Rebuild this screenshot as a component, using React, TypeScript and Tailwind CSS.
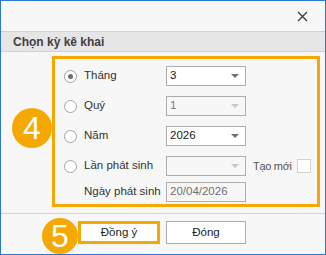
import { useState } from 'react'

type Row = {
  key: string
  label: string
  value: string
  disabled?: boolean
}

const rows: Row[] = [
  { key: 'thang', label: 'Tháng', value: '3' },
  { key: 'quy', label: 'Quý', value: '1', disabled: true },
  { key: 'nam', label: 'Năm', value: '2026' },
  { key: 'lan', label: 'Lần phát sinh', value: '', disabled: true },
]

function Radio({ checked }: { checked: boolean }) {
  return (
    <span className="w-[13px] h-[13px] rounded-full border border-[#a3a3a3] bg-white flex items-center justify-center shrink-0">
      {checked && <span className="w-[5px] h-[5px] rounded-full bg-[#6e6e6e]" />}
    </span>
  )
}

function Combo({ value, disabled }: { value: string; disabled?: boolean }) {
  return (
    <div
      className={`w-[80px] h-[20px] shrink-0 border border-[#adadad] flex items-center justify-between pl-[3px] pr-[6px] ${
        disabled ? 'bg-[#f7f7f7] text-[#7a7a7a]' : 'bg-white text-[#202020]'
      }`}
    >
      <span className="leading-none">{value}</span>
      <span
        className={`w-0 h-0 border-l-[4px] border-r-[4px] border-t-[4px] border-l-transparent border-r-transparent ${
          disabled ? 'border-t-[#c9c9c9]' : 'border-t-[#6f6f6f]'
        }`}
      />
    </div>
  )
}

export default function App() {
  const [selected, setSelected] = useState('thang')

  return (
    <div
      className="relative w-[326px] h-[255px] border border-[#2b78d4] bg-[#f7f7f7] flex flex-col text-[11.5px] text-[#333] whitespace-nowrap"
      style={{ fontFamily: '"Liberation Sans", Arial, sans-serif' }}
    >
      {/* Title bar */}
      <div className="h-[30px] flex items-center justify-end pr-[17px] shrink-0">
        <svg width="11" height="11" viewBox="0 0 11 11" className="mt-[1px]">
          <path d="M1 1L10 10M10 1L1 10" stroke="#3c3c3c" strokeWidth="1.3" />
        </svg>
      </div>

      {/* Group header */}
      <div className="h-[21px] bg-[#e6e6e6] border-t border-b border-[#d2d2d2] flex items-center pl-[12px] shrink-0">
        <span className="font-bold text-[12px] text-[#404040] leading-none">Chọn kỳ kê khai</span>
      </div>

      {/* Options box */}
      <div className="ml-[51px] mt-[4px] w-[268px] h-[151px] border-[3px] border-[#f5a900] pt-[7px] pl-[9px] flex flex-col gap-[10px]">
        {rows.map((r) => (
          <div key={r.key} className="flex items-center h-[20px]">
            <button
              onClick={() => setSelected(r.key)}
              className="w-[102px] shrink-0 flex items-center gap-[7px] text-left"
            >
              <Radio checked={selected === r.key} />
              <span className="text-[#333]">{r.label}</span>
            </button>
            <Combo value={r.value} disabled={r.disabled} />
            {r.key === 'lan' && (
              <>
                <span className="ml-[7px] text-[#555] text-[11px] tracking-[-0.3px]">Tạo mới</span>
                <span className="ml-auto mr-[6px] w-[14px] h-[14px] shrink-0 border border-[#d4d4d4] bg-white" />
              </>
            )}
          </div>
        ))}
        <div className="flex items-center h-[20px] -mt-[4px]">
          <span className="w-[102px] shrink-0 pl-[20px] text-[#333]">Ngày phát sinh</span>
          <div className="w-[80px] h-[20px] shrink-0 border border-[#adadad] bg-[#f7f7f7] text-[#6f6f6f] flex items-center pl-[3px]">
            20/04/2026
          </div>
        </div>
      </div>

      {/* Footer */}
      <div className="mt-[6px] border-t border-[#d6d6d6] flex-1 flex items-start pt-[7px] pl-[77px] gap-[6px]">
        <button className="w-[82px] h-[23px] border-[3px] border-[#f5a900] bg-white text-[#222] flex items-center justify-center">
          Đồng ý
        </button>
        <button className="w-[80px] h-[23px] border border-[#adadad] bg-white text-[#222] flex items-center justify-center">
          Đóng
        </button>
      </div>

      {/* Step badges */}
      <div className="absolute left-[11px] top-[107px] w-[40px] h-[40px] rounded-full bg-[#f5a900] text-white flex items-center justify-center text-[32px] leading-none">
        4
      </div>
      <div className="absolute left-[41px] top-[217px] w-[36px] h-[36px] rounded-full bg-[#f5a900] text-white flex items-center justify-center text-[32px] leading-none">
        5
      </div>
    </div>
  )
}
